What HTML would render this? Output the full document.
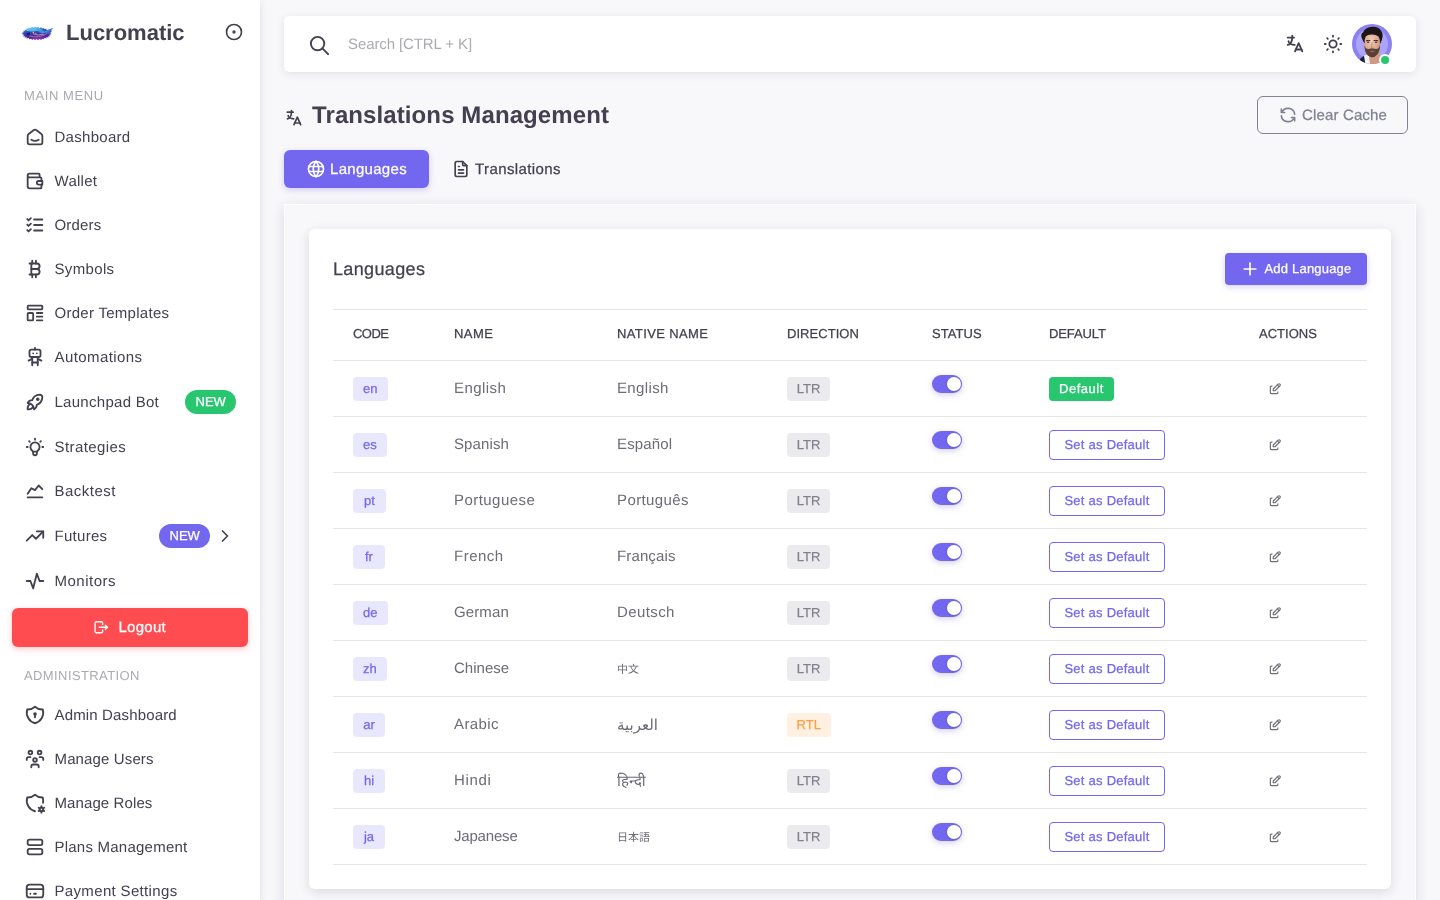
<!DOCTYPE html>
<html lang="en">
<head>
<meta charset="utf-8">
<title>Translations Management - Lucromatic</title>
<style>
*{box-sizing:border-box;margin:0;padding:0}
html,body{width:1440px;height:900px;overflow:hidden}
body{text-rendering:geometricPrecision;background:#f8f7fa;font-family:"Liberation Sans","DejaVu Sans",sans-serif;font-size:15px;color:#6d6b77;position:relative}
svg.ti{fill:none;stroke:currentColor;stroke-width:2;stroke-linecap:round;stroke-linejoin:round;display:block;flex:none}
a{color:inherit;text-decoration:none}
/* ---------- sidebar ---------- */
#sidebar{position:absolute;left:0;top:0;width:260px;height:900px;background:#fff;box-shadow:0 2px 8px rgba(47,43,61,.12);color:#444050;z-index:5}
.brand{position:absolute;left:0;top:0;width:260px;height:64px}
.brand .logo{position:absolute;left:20px;top:24px}
.brand .name{position:absolute;left:66px;top:19px;font-size:22px;line-height:28px;font-weight:700;color:#444050;letter-spacing:0;white-space:nowrap}
.brand .tog{position:absolute;left:224px;top:22px;width:20px;height:20px;color:#444050}
.mh{position:absolute;left:24px;font-size:13px;line-height:18px;color:#acaab1;letter-spacing:.75px;white-space:nowrap;text-transform:uppercase}
.mi{position:absolute;left:12px;width:236px;height:38px;display:flex;align-items:center;padding-left:12px;font-size:15px;color:#444050;white-space:nowrap}
.mi svg{width:22px;height:22px;margin-right:8px}
.mi span.t{display:block;letter-spacing:.28px;position:relative;top:0;left:.5px}
.pill{position:absolute;top:7px;height:24px;border-radius:12px;color:#fff;font-size:13px;line-height:24px;padding:0 10.5px;font-weight:400;letter-spacing:0}
.pill.g{background:#28c76f}
.pill.p{background:#7367f0}
.logout{position:absolute;left:12px;top:608px;width:236px;height:39px;border-radius:6px;background:#ff4c51;color:#fff;display:flex;align-items:center;justify-content:center;font-size:15px;box-shadow:0 2px 6px rgba(255,76,81,.3)}
.logout svg{width:16.5px;height:16.5px;margin-left:-1px;margin-right:9px}
.logout span{letter-spacing:.27px;position:relative;top:0}
/* ---------- navbar ---------- */
#nav{position:absolute;left:284px;top:16px;width:1132px;height:56px;background:#fff;border-radius:6px;box-shadow:0 2px 8px rgba(47,43,61,.1)}
#nav .s{position:absolute;left:23.7px;top:17.5px;width:23px;height:23px;color:#444050}
#nav .ph{position:absolute;left:64px;top:18px;font-size:15px;line-height:22px;color:#acaab1;letter-spacing:-.1px;white-space:nowrap}
#nav .i1{position:absolute;left:1000px;top:17px;width:22px;height:22px;color:#444050}
#nav .i2{position:absolute;left:1038px;top:17px;width:22px;height:22px;color:#444050}
#nav .av{position:absolute;left:1068px;top:8px;width:40px;height:40px}
/* ---------- page ---------- */
#title{position:absolute;left:284px;top:100px;height:32px;display:flex;align-items:center;color:#444050;white-space:nowrap}
#title svg{width:20px;height:20px;margin-right:8px;position:relative;top:2px}
#title h4{font-size:24px;line-height:32px;font-weight:700;letter-spacing:.1px}
#clear{position:absolute;left:1257px;top:96px;width:151px;height:38px;border:1px solid #808390;border-radius:6px;color:#808390;display:flex;align-items:center;justify-content:center;font-size:15px;white-space:nowrap}
#clear svg{width:20px;height:20px;margin-right:4px}
#clear span{letter-spacing:.15px;position:relative;top:0}
.tab1{position:absolute;left:284px;top:150px;width:145px;height:38px;border-radius:6px;background:#7367f0;color:#fff;display:flex;align-items:center;justify-content:center;font-size:15px;box-shadow:0 2px 6px rgba(115,103,240,.3);white-space:nowrap}
.tab1 svg,.tab2 svg{width:20px;height:20px;margin-right:4px}
.tab1 span,.tab2 span{position:relative;top:0}
.tab1 span{letter-spacing:.3px}
.tab2 span{letter-spacing:.4px}
.tab2{position:absolute;left:429px;top:150px;width:154px;height:38px;color:#444050;display:flex;align-items:center;justify-content:center;font-size:15px;white-space:nowrap}
#tabc{position:absolute;left:284px;top:204px;width:1132px;height:720px;border:1px solid #fff;box-shadow:0 3px 12px rgba(47,43,61,.14)}
#card{position:absolute;left:309px;top:229px;width:1082px;height:660px;background:#fff;border-radius:6px;box-shadow:0 3px 12px rgba(47,43,61,.14)}
#card h5{position:absolute;left:24px;top:26px;font-size:18px;line-height:28px;font-weight:400;color:#444050;letter-spacing:.36px}
#add{position:absolute;left:916px;top:24px;width:142px;height:32px;border-radius:4px;background:#7367f0;color:#fff;display:flex;align-items:center;justify-content:center;font-size:13px;box-shadow:0 2px 6px rgba(115,103,240,.3);white-space:nowrap}
#add svg{width:20px;height:20px;margin-left:-1px;margin-right:5px}
#add span{letter-spacing:.2px;position:relative;top:-.5px}
table{position:absolute;left:24px;top:80px;width:1034px;border-collapse:collapse;table-layout:fixed}
th{height:51px;border-top:1px solid #e6e6e8;border-bottom:1px solid #e6e6e8;text-align:left;padding:0 20px;font-size:13px;font-weight:400;color:#444050;letter-spacing:.45px;text-transform:uppercase;white-space:nowrap}
td{height:56px;border-bottom:1px solid #e6e6e8;padding:0 20px;font-size:15px;color:#6d6b77;white-space:nowrap;vertical-align:middle;letter-spacing:.2px}
.b{display:inline-block;height:24px;line-height:24px;border-radius:4px;padding:0 10.3px;font-size:13px;vertical-align:middle;text-align:center;position:relative;top:.5px;letter-spacing:0}
.b.c{padding:0}
td .x{display:inline-block;position:relative;top:0}
th span{display:inline-block;position:relative;top:-1.5px}
.b.c{background:#e9e7fd;color:#7367f0}
.b.l{background:#ebebed;color:#808390;padding:0;width:43px}
.b.r{background:#fff0e1;color:#ff9f43;padding:0;width:43.5px}
.b.d{background:#28c76f;color:#fff;padding:0;width:64.8px;letter-spacing:.5px}
.sw{display:block;width:30px;height:18px;border-radius:9px;background:#7367f0;position:relative;top:-5px;box-shadow:0 2px 6px rgba(115,103,240,.3)}
.sw i{position:absolute;right:1px;top:2px;width:14px;height:14px;border-radius:7px;background:#fff;box-shadow:0 1px 3px rgba(47,43,61,.2)}
.sd{display:inline-block;width:116px;height:30px;line-height:28px;border:1px solid #7367f0;border-radius:4px;color:#7367f0;font-size:13px;text-align:center;vertical-align:middle;position:relative;top:0;letter-spacing:.25px}
.ed{display:block;width:14px;height:14px;margin-left:8.5px;color:#6d6b77;position:relative;top:0}
.chev{position:absolute;left:203px;top:9px;width:20px;height:20px;color:#444050}
.chev svg{width:20px;height:20px}
.cjk-sc{font-family:"Liberation Sans","Noto Sans CJK SC",sans-serif}
.cjk-jp{font-family:"Liberation Sans","Noto Sans CJK JP",sans-serif}
.ar{font-family:"Liberation Sans","DejaVu Sans",sans-serif}
.cjk-sc,.cjk-jp{font-size:11px;letter-spacing:0}
th span,.b,.sd,#add span,.tab1 span,.tab2 span,#clear span,.logout span,.pill,#card h5{-webkit-text-stroke:.25px currentColor}
#app{position:absolute;left:0;top:0;width:1440px;height:900px;will-change:transform}
</style>
</head>
<body>
<div id="app">
<aside id="sidebar">
<div class="brand">
<svg class="logo" width="36" height="18" viewBox="0 0 36 18"><defs><linearGradient id="lg" x1="0" y1="0" x2=".25" y2="1"><stop offset="0" stop-color="#3a8fdc"/><stop offset=".45" stop-color="#3448b8"/><stop offset=".8" stop-color="#43259a"/><stop offset="1" stop-color="#7a2fb8"/></linearGradient><filter id="lb" x="-10%" y="-20%" width="120%" height="140%"><feGaussianBlur stdDeviation=".45"/></filter></defs><g filter="url(#lb)"><polygon points="31.8,9.6 29.3,10.2 31.5,11.0 28.7,11.3 30.5,12.3 27.7,12.4 28.9,13.5 26.1,13.3 26.8,14.5 24.1,14.1 24.2,15.3 21.8,14.7 21.3,15.9 19.3,15.0 18.2,16.2 16.6,15.1 15.0,16.2 13.9,15.0 11.9,15.9 11.4,14.7 9.0,15.3 9.1,14.1 6.4,14.5 7.1,13.3 4.3,13.5 5.5,12.4 2.7,12.3 4.5,11.3 1.7,11.0 3.9,10.2 1.4,9.6 3.9,9.0 1.7,8.2 4.5,7.9 2.7,6.9 5.5,6.8 4.3,5.7 7.1,5.9 6.4,4.7 9.1,5.1 9.0,3.9 11.4,4.5 11.9,3.3 13.9,4.2 15.0,3.0 16.6,4.1 18.2,3.0 19.3,4.2 21.3,3.3 21.8,4.5 24.2,3.9 24.1,5.1 26.8,4.7 26.1,5.9 28.9,5.7 27.7,6.8 30.5,6.9 28.7,7.9 31.5,8.2 29.3,9.0" fill="url(#lg)"/><path d="M24 7.500 L33.300 3.800 L31.200 6.200 L32 7 L28.500 10.500 Z" fill="#3d63d4"/><path d="M5.500 6 Q9 2.600 15 3.300 Q20 3.600 22 6 Q16 7.800 10 7.300 Q6.500 7.400 5.500 6Z" fill="#5cc6ea" opacity=".9"/><path d="M16 5 Q21 4 24.500 7.500 Q27 6.500 30 5.200 Q27 9 22 9.500 Q18 8 16 5Z" fill="#3fa0e0" opacity=".85"/><path d="M9 11.800 Q18 14.800 27 9.600" stroke="#e8987a" stroke-width=".9" fill="none" opacity=".75"/><path d="M13 9.800 Q18 12 24 10.200" stroke="#e48fd0" stroke-width="1" fill="none" opacity=".8"/><circle cx="13.300" cy="8.600" r=".8" fill="#f5b25e"/><circle cx="15.800" cy="9.600" r=".7" fill="#f09a5a"/><path d="M6.500 9 L10 8.600 L10 11.600 L7 11.600Z" fill="#1c1a66" opacity=".85"/><path d="M8 13.600 Q17 16.800 26 13.200 Q17 15 8 13.600Z" fill="#7d35c0"/></g></svg>
<span class="name">Lucromatic</span>
<span class="tog"><svg class="ti" viewBox="0 0 24 24"><path d="M12 12m-1 0a1 1 0 1 0 2 0a1 1 0 1 0 -2 0"/><path d="M12 12m-9 0a9 9 0 1 0 18 0a9 9 0 1 0 -18 0"/></svg></span>
</div>
<div class="mh" style="top:87px;letter-spacing:.6px">MAIN MENU</div>
<a class="mi" style="top:118px"><svg class="ti" viewBox="0 0 24 24"><path d="M19 8.71l-5.333 -4.148a2.666 2.666 0 0 0 -3.274 0l-5.334 4.148a2.665 2.665 0 0 0 -1.029 2.105v7.2a2 2 0 0 0 2 2h12a2 2 0 0 0 2 -2v-7.2c0 -.823 -.38 -1.6 -1.03 -2.105"/><path d="M16 15c-2.21 1.333 -5.792 1.333 -8 0"/></svg><span class="t" style="letter-spacing:0.28px">Dashboard</span></a>
<a class="mi" style="top:162px"><svg class="ti" viewBox="0 0 24 24"><path d="M17 8v-3a1 1 0 0 0 -1 -1h-10a2 2 0 0 0 0 4h12a1 1 0 0 1 1 1v3m0 4v3a1 1 0 0 1 -1 1h-12a2 2 0 0 1 -2 -2v-12"/><path d="M20 12v4h-4a2 2 0 0 1 0 -4h4"/></svg><span class="t" style="letter-spacing:0.28px">Wallet</span></a>
<a class="mi" style="top:206px"><svg class="ti" viewBox="0 0 24 24"><path d="M3.5 5.5l1.5 1.5l2.5 -2.5"/><path d="M3.5 11.5l1.5 1.5l2.5 -2.5"/><path d="M3.5 17.5l1.5 1.5l2.5 -2.5"/><path d="M11 6l9 0"/><path d="M11 12l9 0"/><path d="M11 18l9 0"/></svg><span class="t" style="letter-spacing:0.16px">Orders</span></a>
<a class="mi" style="top:250px"><svg class="ti" viewBox="0 0 24 24"><path d="M6 6h8a3 3 0 0 1 0 6a3 3 0 0 1 0 6h-8"/><path d="M8 6l0 12"/><path d="M8 12l6 0"/><path d="M9 3l0 3"/><path d="M13 3l0 3"/><path d="M9 18l0 3"/><path d="M13 18l0 3"/></svg><span class="t" style="letter-spacing:0.35px">Symbols</span></a>
<a class="mi" style="top:294px"><svg class="ti" viewBox="0 0 24 24"><path d="M4 4m0 1a1 1 0 0 1 1 -1h14a1 1 0 0 1 1 1v2a1 1 0 0 1 -1 1h-14a1 1 0 0 1 -1 -1z"/><path d="M4 12m0 1a1 1 0 0 1 1 -1h4a1 1 0 0 1 1 1v6a1 1 0 0 1 -1 1h-4a1 1 0 0 1 -1 -1z"/><path d="M14 12l6 0"/><path d="M14 16l6 0"/><path d="M14 20l6 0"/></svg><span class="t" style="letter-spacing:0.28px">Order Templates</span></a>
<a class="mi" style="top:338px"><svg class="ti" viewBox="0 0 24 24"><path d="M6 4m0 2a2 2 0 0 1 2 -2h8a2 2 0 0 1 2 2v4a2 2 0 0 1 -2 2h-8a2 2 0 0 1 -2 -2z"/><path d="M12 2v2"/><path d="M9 12v9"/><path d="M15 12v9"/><path d="M5 16l4 -2"/><path d="M15 14l4 2"/><path d="M9 18h6"/><path d="M10 8v.01"/><path d="M14 8v.01"/></svg><span class="t" style="letter-spacing:0.41px">Automations</span></a>
<a class="mi" style="top:383px"><svg class="ti" viewBox="0 0 24 24"><path d="M4 13a8 8 0 0 1 7 7a6 6 0 0 0 3 -5a9 9 0 0 0 6 -8a3 3 0 0 0 -3 -3a9 9 0 0 0 -8 6a6 6 0 0 0 -5 3"/><path d="M7 14a6 6 0 0 0 -3 6a6 6 0 0 0 6 -3"/><path d="M15 9m-1 0a1 1 0 1 0 2 0a1 1 0 1 0 -2 0"/></svg><span class="t" style="letter-spacing:0.28px">Launchpad Bot</span><span class="pill g" style="left:173px">NEW</span></a>
<a class="mi" style="top:428px"><svg class="ti" viewBox="0 0 24 24"><path d="M3 12h1m8 -9v1m8 8h1m-15.4 -6.4l.7 .7m12.1 -.7l-.7 .7"/><path d="M9 16a5 5 0 1 1 6 0a3.5 3.5 0 0 0 -1 3a2 2 0 0 1 -4 0a3.5 3.5 0 0 0 -1 -3"/><path d="M9.7 17l4.6 0"/></svg><span class="t" style="letter-spacing:0.41px">Strategies</span></a>
<a class="mi" style="top:472px"><svg class="ti" viewBox="0 0 24 24"><path d="M4 19l16 0"/><path d="M4 15l4 -6l4 2l4 -5l4 4"/></svg><span class="t" style="letter-spacing:0.49px">Backtest</span></a>
<a class="mi" style="top:517px"><svg class="ti" viewBox="0 0 24 24"><path d="M3 17l6 -6l4 4l8 -8"/><path d="M14 7l7 0l0 7"/></svg><span class="t" style="letter-spacing:0.28px">Futures</span><span class="pill p" style="left:147px">NEW</span><span class="chev"><svg class="ti" viewBox="0 0 24 24"><path d="M9 6l6 6l-6 6"/></svg></span></a>
<a class="mi" style="top:562px"><svg class="ti" viewBox="0 0 24 24"><path d="M3 12h4l3 8l4 -16l3 8h4"/></svg><span class="t" style="letter-spacing:0.49px">Monitors</span></a>
<a class="logout"><svg class="ti" viewBox="0 0 24 24"><path d="M14 8v-2a2 2 0 0 0 -2 -2h-7a2 2 0 0 0 -2 2v12a2 2 0 0 0 2 2h7a2 2 0 0 0 2 -2v-2"/><path d="M9 12h12l-3 -3"/><path d="M18 15l3 -3"/></svg><span>Logout</span></a>
<div class="mh" style="top:667px;letter-spacing:.4px">ADMINISTRATION</div>
<a class="mi" style="top:696px"><svg class="ti" viewBox="0 0 24 24"><path d="M12 3a12 12 0 0 0 8.5 3a12 12 0 0 1 -8.5 15a12 12 0 0 1 -8.5 -15a12 12 0 0 0 8.5 -3"/><path d="M12 11m-1 0a1 1 0 1 0 2 0a1 1 0 1 0 -2 0"/><path d="M12 12l0 2.5"/></svg><span class="t" style="letter-spacing:0.15px">Admin Dashboard</span></a>
<a class="mi" style="top:740px"><svg class="ti" viewBox="0 0 24 24"><path d="M10 13a2 2 0 1 0 4 0a2 2 0 0 0 -4 0"/><path d="M8 21v-1a2 2 0 0 1 2 -2h4a2 2 0 0 1 2 2v1"/><path d="M15 5a2 2 0 1 0 4 0a2 2 0 0 0 -4 0"/><path d="M17 10h2a2 2 0 0 1 2 2v1"/><path d="M5 5a2 2 0 1 0 4 0a2 2 0 0 0 -4 0"/><path d="M3 13v-1a2 2 0 0 1 2 -2h2"/></svg><span class="t" style="letter-spacing:0.13px">Manage Users</span></a>
<a class="mi" style="top:784px"><svg class="ti" viewBox="0 0 24 24"><path d="M12 21a12 12 0 0 1 -8.5 -15a12 12 0 0 0 8.5 -3a12 12 0 0 0 8.5 3c.568 1.933 .635 3.957 .223 5.89"/><path d="M19.001 19m-2 0a2 2 0 1 0 4 0a2 2 0 1 0 -4 0"/><path d="M19.001 15.5v1.5"/><path d="M19.001 21v1.5"/><path d="M22.032 17.25l-1.299 .75"/><path d="M17.27 20l-1.3 .75"/><path d="M15.97 17.25l1.3 .75"/><path d="M20.733 20l1.3 .75"/></svg><span class="t" style="letter-spacing:0.10px">Manage Roles</span></a>
<a class="mi" style="top:828px"><svg class="ti" viewBox="0 0 24 24"><path d="M4 4m0 2a2 2 0 0 1 2 -2h12a2 2 0 0 1 2 2v2a2 2 0 0 1 -2 2h-12a2 2 0 0 1 -2 -2z"/><path d="M4 14m0 2a2 2 0 0 1 2 -2h12a2 2 0 0 1 2 2v2a2 2 0 0 1 -2 2h-12a2 2 0 0 1 -2 -2z"/></svg><span class="t" style="letter-spacing:0.23px">Plans Management</span></a>
<a class="mi" style="top:872px"><svg class="ti" viewBox="0 0 24 24"><path d="M3 5m0 3a3 3 0 0 1 3 -3h12a3 3 0 0 1 3 3v8a3 3 0 0 1 -3 3h-12a3 3 0 0 1 -3 -3z"/><path d="M3 10l18 0"/><path d="M7 15l.01 0"/><path d="M11 15l2 0"/></svg><span class="t" style="letter-spacing:0.34px">Payment Settings</span></a>
</aside>
<header id="nav">
<span class="s"><svg class="ti" viewBox="0 0 24 24"><path d="M10 10m-7 0a7 7 0 1 0 14 0a7 7 0 1 0 -14 0"/><path d="M21 21l-6 -6"/></svg></span><span class="ph">Search [CTRL + K]</span>
<span class="i1"><svg class="ti" viewBox="0 0 24 24"><path d="M4 5h7"/><path d="M9 3v2c0 4.418 -2.239 8 -5 8"/><path d="M5 9c0 2.144 2.952 3.908 6.7 4"/><path d="M12 20l4 -9l4 9"/><path d="M19.1 18h-6.2"/></svg></span><span class="i2"><svg class="ti" viewBox="0 0 24 24"><path d="M12 12m-4 0a4 4 0 1 0 8 0a4 4 0 1 0 -8 0"/><path d="M3 12h1m8 -9v1m8 8h1m-9 8v1m-6.4 -15.4l.7 .7m12.1 -.7l-.7 .7m0 11.4l.7 .7m-12.1 -.7l-.7 .7"/></svg></span><svg class="av" viewBox="0 0 40 40"><defs><clipPath id="avc"><circle cx="20" cy="20" r="20"/></clipPath><radialGradient id="sk" cx=".45" cy=".3" r=".75"><stop offset="0" stop-color="#f3cdb8"/><stop offset=".55" stop-color="#dcaa8f"/><stop offset="1" stop-color="#b98468"/></radialGradient><filter id="ab" x="-10%" y="-10%" width="120%" height="120%"><feGaussianBlur stdDeviation=".45"/></filter></defs>
<g clip-path="url(#avc)"><rect width="40" height="40" fill="#8b81f3"/><circle cx="20" cy="20" r="16" fill="#aca5f7"/>
<g filter="url(#ab)">
<path d="M6.500 38 Q8 33.500 12.500 31.500 L14 40 L5 41Z" fill="#1f2433"/>
<path d="M12 31.500 L17.500 30 L18.500 41 L13.500 41Z" fill="#f4f4f7"/>
<path d="M16.800 29 L27.800 28 L28.500 41 L18 41Z" fill="#cf9a80"/>
<path d="M12.200 17 Q11.600 9.500 20 9.300 Q28.400 9.500 28 18 Q28.300 26 25.500 30 Q22.500 33.600 19.500 33.200 Q15.500 32.500 13.400 27.500 Q12.200 23 12.200 17Z" fill="url(#sk)"/>
<path d="M12.400 21 Q13 23 13.800 24.300 Q16 25.300 17.500 24.800 Q20 23.600 22.800 24.800 Q25 25.400 26.800 24 Q27.400 22.500 27.900 20.500 Q28.200 27 25.500 30.300 Q22.500 33.800 19.500 33.300 Q15.500 32.600 13.300 27.600 Q12.300 24.500 12.400 21Z" fill="#3d2a23" opacity=".8"/>
<path d="M17.600 27.200 Q20.200 26.300 22.800 27.200 Q20.200 28.300 17.600 27.200Z" fill="#b57a6a"/>
<path d="M12.600 19.500 Q10.800 17 9.600 13.500 Q8.600 10 11 8.600 Q12.500 4 18.500 3 Q25 1.800 28.500 6 Q31.500 9 30.300 14 Q29.600 17.500 28 20 Q28.200 15 26.600 12.400 Q23 10.200 19.500 10.600 Q15.500 10.600 13.600 12.600 Q12.500 15.500 12.600 19.500Z" fill="#1b1514"/>
<path d="M14 16.900 Q16 15.900 18.300 16.700 M21.600 16.700 Q24 15.900 26.200 16.900" stroke="#2a1c18" stroke-width=".9" fill="none"/>
<ellipse cx="16.200" cy="18.200" rx="1.300" ry=".6" fill="#3b2a26"/><ellipse cx="24" cy="18.200" rx="1.300" ry=".6" fill="#3b2a26"/>
<path d="M20.300 18.500 Q19.600 22 19.400 23.300 Q20.300 24 21.400 23.400" stroke="#b07f68" stroke-width=".7" fill="none"/>
</g></g>
<circle cx="33.070" cy="36" r="6" fill="#fff"/><circle cx="33.070" cy="36" r="4" fill="#28c76f"/></svg>
</header>
<main id="page">
<div id="title"><svg class="ti" viewBox="0 0 24 24"><path d="M4 5h7"/><path d="M9 3v2c0 4.418 -2.239 8 -5 8"/><path d="M5 9c0 2.144 2.952 3.908 6.7 4"/><path d="M12 20l4 -9l4 9"/><path d="M19.1 18h-6.2"/></svg><h4>Translations Management</h4></div>
<a id="clear"><svg class="ti" viewBox="0 0 24 24"><path d="M20 11a8.1 8.1 0 0 0 -15.5 -2m-.5 -4v4h4"/><path d="M4 13a8.1 8.1 0 0 0 15.5 2m.5 4v-4h-4"/></svg><span>Clear Cache</span></a>
<a class="tab1"><svg class="ti" viewBox="0 0 24 24"><path d="M3 12a9 9 0 1 0 18 0a9 9 0 0 0 -18 0"/><path d="M3.6 9h16.8"/><path d="M3.6 15h16.8"/><path d="M11.5 3a17 17 0 0 0 0 18"/><path d="M12.5 3a17 17 0 0 1 0 18"/></svg><span>Languages</span></a>
<a class="tab2"><svg class="ti" viewBox="0 0 24 24"><path d="M14 3v4a1 1 0 0 0 1 1h4"/><path d="M17 21h-10a2 2 0 0 1 -2 -2v-14a2 2 0 0 1 2 -2h7l5 5v11a2 2 0 0 1 -2 2z"/><path d="M9 9l1 0"/><path d="M9 13l6 0"/><path d="M9 17l6 0"/></svg><span>Translations</span></a>
<div id="tabc"></div>
<section id="card">
<h5>Languages</h5>
<a id="add"><svg class="ti" viewBox="0 0 24 24"><path d="M12 5l0 14"/><path d="M5 12l14 0"/></svg><span>Add Language</span></a>
<table>
<colgroup><col style="width:101px"><col style="width:163px"><col style="width:170px"><col style="width:145px"><col style="width:117px"><col style="width:210px"><col style="width:128px"></colgroup>
<thead><tr><th><span style="letter-spacing:-0.55px">CODE</span></th><th><span style="letter-spacing:0.42px">NAME</span></th><th><span style="letter-spacing:0.37px">NATIVE NAME</span></th><th><span style="letter-spacing:0.04px">DIRECTION</span></th><th><span style="letter-spacing:0.05px">STATUS</span></th><th><span style="letter-spacing:-0.10px">DEFAULT</span></th><th><span style="letter-spacing:0.03px">ACTIONS</span></th></tr></thead>
<tbody>
<tr><td><span class="b c" style="width:34.7px">en</span></td><td style="letter-spacing:0.45px"><span class="x">English</span></td><td><span class="x" style="letter-spacing:0.37px">English</span></td><td><span class="b l">LTR</span></td><td><span class="sw"><i></i></span></td><td><span class="b d">Default</span></td><td><a class="ed"><svg class="ti" viewBox="0 0 24 24"><path d="M7 7h-1a2 2 0 0 0 -2 2v9a2 2 0 0 0 2 2h9a2 2 0 0 0 2 -2v-1"/><path d="M20.385 6.585a2.1 2.1 0 0 0 -2.97 -2.97l-8.415 8.385v3h3l8.385 -8.415z"/><path d="M16 5l3 3"/></svg></a></td></tr>
<tr><td><span class="b c" style="width:33.7px">es</span></td><td style="letter-spacing:0.12px"><span class="x">Spanish</span></td><td><span class="x" style="letter-spacing:0.16px">Español</span></td><td><span class="b l">LTR</span></td><td><span class="sw"><i></i></span></td><td><a class="sd">Set as Default</a></td><td><a class="ed"><svg class="ti" viewBox="0 0 24 24"><path d="M7 7h-1a2 2 0 0 0 -2 2v9a2 2 0 0 0 2 2h9a2 2 0 0 0 2 -2v-1"/><path d="M20.385 6.585a2.1 2.1 0 0 0 -2.97 -2.97l-8.415 8.385v3h3l8.385 -8.415z"/><path d="M16 5l3 3"/></svg></a></td></tr>
<tr><td><span class="b c" style="width:32.8px">pt</span></td><td style="letter-spacing:0.45px"><span class="x">Portuguese</span></td><td><span class="x" style="letter-spacing:0.39px">Português</span></td><td><span class="b l">LTR</span></td><td><span class="sw"><i></i></span></td><td><a class="sd">Set as Default</a></td><td><a class="ed"><svg class="ti" viewBox="0 0 24 24"><path d="M7 7h-1a2 2 0 0 0 -2 2v9a2 2 0 0 0 2 2h9a2 2 0 0 0 2 -2v-1"/><path d="M20.385 6.585a2.1 2.1 0 0 0 -2.97 -2.97l-8.415 8.385v3h3l8.385 -8.415z"/><path d="M16 5l3 3"/></svg></a></td></tr>
<tr><td><span class="b c" style="width:31.9px">fr</span></td><td style="letter-spacing:0.50px"><span class="x">French</span></td><td><span class="x" style="letter-spacing:0.13px">Français</span></td><td><span class="b l">LTR</span></td><td><span class="sw"><i></i></span></td><td><a class="sd">Set as Default</a></td><td><a class="ed"><svg class="ti" viewBox="0 0 24 24"><path d="M7 7h-1a2 2 0 0 0 -2 2v9a2 2 0 0 0 2 2h9a2 2 0 0 0 2 -2v-1"/><path d="M20.385 6.585a2.1 2.1 0 0 0 -2.97 -2.97l-8.415 8.385v3h3l8.385 -8.415z"/><path d="M16 5l3 3"/></svg></a></td></tr>
<tr><td><span class="b c" style="width:34.7px">de</span></td><td style="letter-spacing:0.12px"><span class="x">German</span></td><td><span class="x" style="letter-spacing:0.40px">Deutsch</span></td><td><span class="b l">LTR</span></td><td><span class="sw"><i></i></span></td><td><a class="sd">Set as Default</a></td><td><a class="ed"><svg class="ti" viewBox="0 0 24 24"><path d="M7 7h-1a2 2 0 0 0 -2 2v9a2 2 0 0 0 2 2h9a2 2 0 0 0 2 -2v-1"/><path d="M20.385 6.585a2.1 2.1 0 0 0 -2.97 -2.97l-8.415 8.385v3h3l8.385 -8.415z"/><path d="M16 5l3 3"/></svg></a></td></tr>
<tr><td><span class="b c" style="width:33.8px">zh</span></td><td style="letter-spacing:0.02px"><span class="x">Chinese</span></td><td><span class="x cjk-sc" lang="zh">中文</span></td><td><span class="b l">LTR</span></td><td><span class="sw"><i></i></span></td><td><a class="sd">Set as Default</a></td><td><a class="ed"><svg class="ti" viewBox="0 0 24 24"><path d="M7 7h-1a2 2 0 0 0 -2 2v9a2 2 0 0 0 2 2h9a2 2 0 0 0 2 -2v-1"/><path d="M20.385 6.585a2.1 2.1 0 0 0 -2.97 -2.97l-8.415 8.385v3h3l8.385 -8.415z"/><path d="M16 5l3 3"/></svg></a></td></tr>
<tr><td><span class="b c" style="width:32.0px">ar</span></td><td style="letter-spacing:0.40px"><span class="x">Arabic</span></td><td><span class="x ar" lang="ar" dir="rtl">العربية</span></td><td><span class="b r">RTL</span></td><td><span class="sw"><i></i></span></td><td><a class="sd">Set as Default</a></td><td><a class="ed"><svg class="ti" viewBox="0 0 24 24"><path d="M7 7h-1a2 2 0 0 0 -2 2v9a2 2 0 0 0 2 2h9a2 2 0 0 0 2 -2v-1"/><path d="M20.385 6.585a2.1 2.1 0 0 0 -2.97 -2.97l-8.415 8.385v3h3l8.385 -8.415z"/><path d="M16 5l3 3"/></svg></a></td></tr>
<tr><td><span class="b c" style="width:32.0px">hi</span></td><td style="letter-spacing:0.68px"><span class="x">Hindi</span></td><td><span class="x hi" lang="hi">हिन्दी</span></td><td><span class="b l">LTR</span></td><td><span class="sw"><i></i></span></td><td><a class="sd">Set as Default</a></td><td><a class="ed"><svg class="ti" viewBox="0 0 24 24"><path d="M7 7h-1a2 2 0 0 0 -2 2v9a2 2 0 0 0 2 2h9a2 2 0 0 0 2 -2v-1"/><path d="M20.385 6.585a2.1 2.1 0 0 0 -2.97 -2.97l-8.415 8.385v3h3l8.385 -8.415z"/><path d="M16 5l3 3"/></svg></a></td></tr>
<tr><td><span class="b c" style="width:32.0px">ja</span></td><td style="letter-spacing:-0.19px"><span class="x">Japanese</span></td><td><span class="x cjk-jp" lang="ja">日本語</span></td><td><span class="b l">LTR</span></td><td><span class="sw"><i></i></span></td><td><a class="sd">Set as Default</a></td><td><a class="ed"><svg class="ti" viewBox="0 0 24 24"><path d="M7 7h-1a2 2 0 0 0 -2 2v9a2 2 0 0 0 2 2h9a2 2 0 0 0 2 -2v-1"/><path d="M20.385 6.585a2.1 2.1 0 0 0 -2.97 -2.97l-8.415 8.385v3h3l8.385 -8.415z"/><path d="M16 5l3 3"/></svg></a></td></tr>
</tbody>
</table>
</section>
</main>
</div>
</body>
</html>
